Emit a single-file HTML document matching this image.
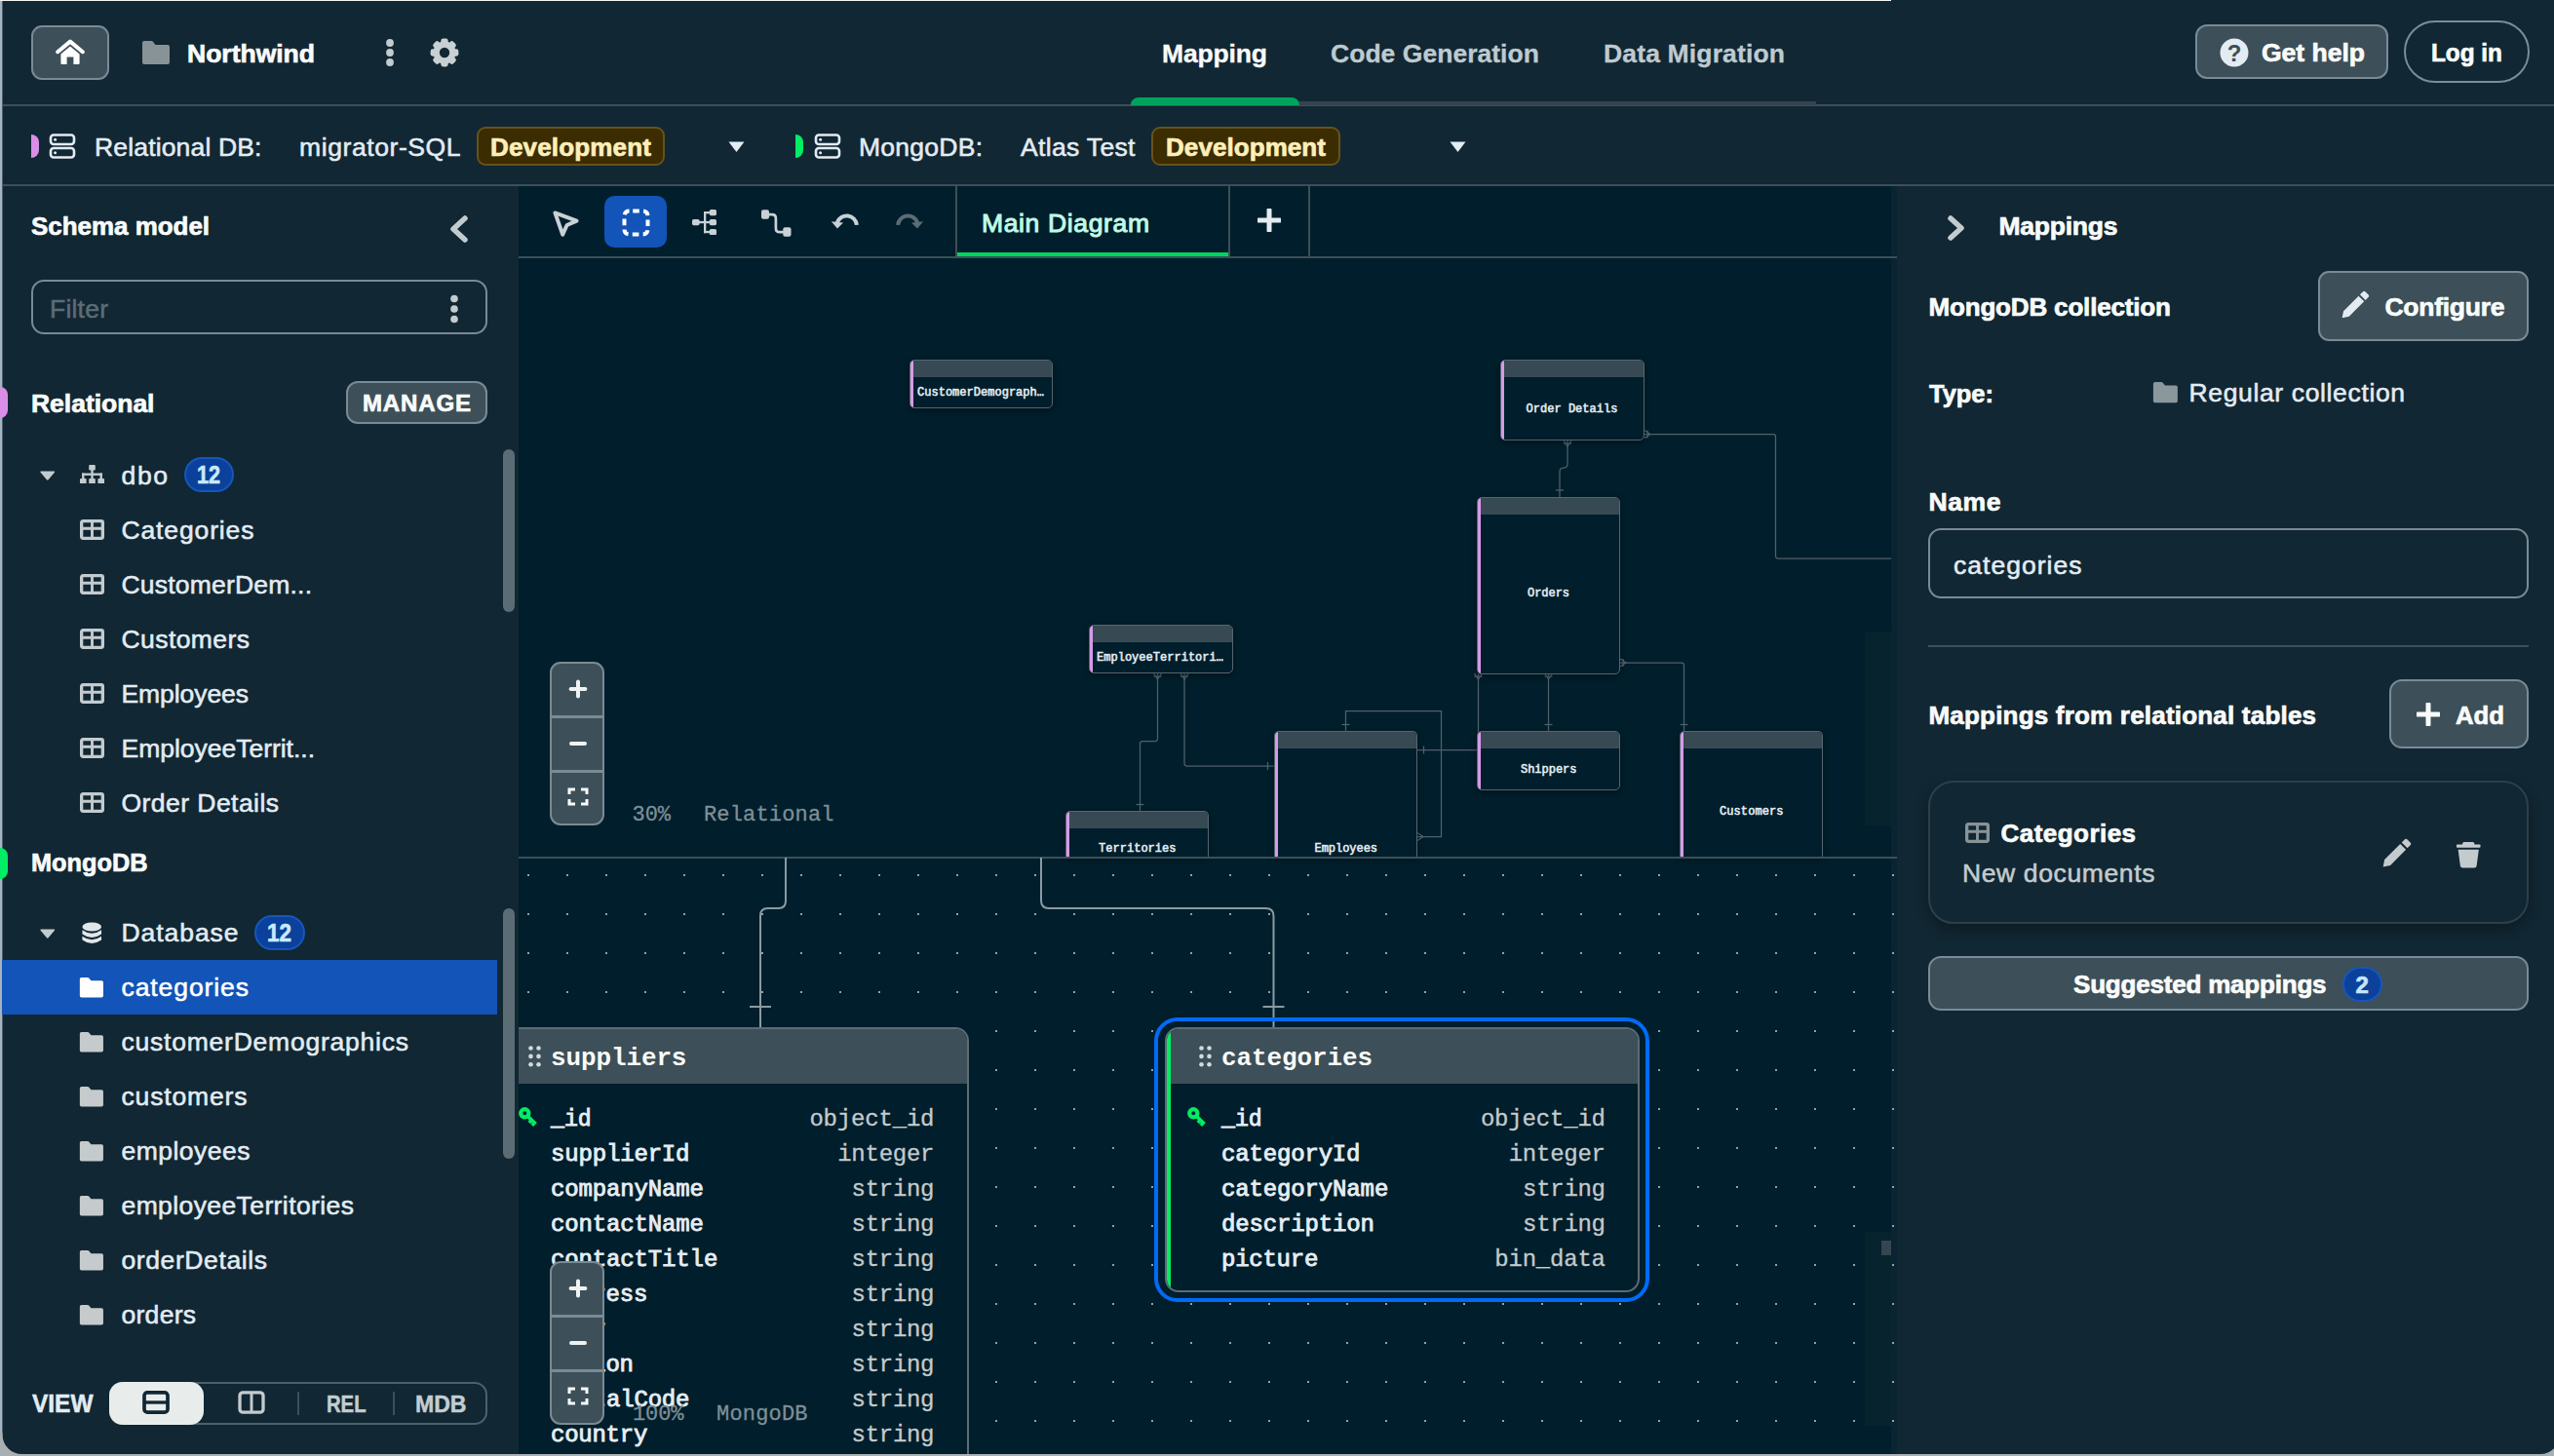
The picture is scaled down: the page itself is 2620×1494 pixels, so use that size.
<!DOCTYPE html>
<html><head><meta charset="utf-8"><title>Relational Migrator</title><style>
html,body{margin:0;padding:0;}
html{width:2620px;height:1494px;overflow:hidden;}
body{width:2620px;height:1494px;overflow:hidden;position:relative;background:#112733;font-family:"Liberation Sans", sans-serif;}
.a{position:absolute;box-sizing:border-box;display:block;}
.t{position:absolute;white-space:pre;line-height:1;}
.s{font-family:"Liberation Sans", sans-serif;}
.m{font-family:"Liberation Mono", monospace;}
</style></head>
<body>
<div class="a" style="left:532px;top:191px;width:1414px;height:1303px;background:#001E2B;"></div>
<div class="a" style="left:1940px;top:191px;width:6px;height:1303px;background:#0A2431;"></div>
<div class="a" style="left:0px;top:107px;width:2620px;height:2px;background:#3D4F58;"></div>
<div class="a" style="left:0px;top:189px;width:2620px;height:2px;background:#3D4F58;"></div>
<div class="a" style="left:32px;top:26px;width:80px;height:56px;background:#3D4F58;border:2px solid #788B97;border-radius:11px;"></div>
<svg class="a" style="left:57px;top:40px;" width="30" height="27" viewBox="0 0 30 27"><path d="M2.2 13.2 L15 2.6 L27.8 13.2" fill="none" stroke="#FFFFFF" stroke-width="4" stroke-linecap="round" stroke-linejoin="round"/><path d="M15 7.4 L24.6 15.4 V25 Q24.6 26 23.6 26 H18.4 V18.6 H11.6 V26 H6.4 Q5.4 26 5.4 25 V15.4 Z" fill="#FFFFFF"/></svg>
<svg class="a" style="left:143px;top:40px;" width="34" height="28" viewBox="0 1 16 14"><path d="M2 2a1 1 0 0 0-1 1v10a1 1 0 0 0 1 1h12a1 1 0 0 0 1-1V5a1 1 0 0 0-1-1H8.2a1 1 0 0 1-.7-.3L6.4 2.3A1 1 0 0 0 5.7 2H2z" fill="#889397"/></svg>
<span class="t s" style="left:192.0px;top:42.1px;font-size:26.5px;color:#F9FBFA;font-weight:700;-webkit-text-stroke:0.7px #F9FBFA;">Northwind</span>
<svg class="a" style="left:393.5px;top:39px;" width="12.0" height="30" viewBox="0 0 12 30"><circle cx="6" cy="5" r="3.9" fill="#C3CBCE"/><circle cx="6" cy="15" r="3.9" fill="#C3CBCE"/><circle cx="6" cy="25" r="3.9" fill="#C3CBCE"/></svg>
<svg class="a" style="left:439.6px;top:38px;" width="32.0" height="32" viewBox="0 0 32.0 32"><g transform="translate(16 16)"><rect x="-3.7" y="-14.4" width="7.4" height="7.2" rx="2.4" transform="rotate(0)" fill="#C8D0D3"/><rect x="-3.7" y="-14.4" width="7.4" height="7.2" rx="2.4" transform="rotate(45)" fill="#C8D0D3"/><rect x="-3.7" y="-14.4" width="7.4" height="7.2" rx="2.4" transform="rotate(90)" fill="#C8D0D3"/><rect x="-3.7" y="-14.4" width="7.4" height="7.2" rx="2.4" transform="rotate(135)" fill="#C8D0D3"/><rect x="-3.7" y="-14.4" width="7.4" height="7.2" rx="2.4" transform="rotate(180)" fill="#C8D0D3"/><rect x="-3.7" y="-14.4" width="7.4" height="7.2" rx="2.4" transform="rotate(225)" fill="#C8D0D3"/><rect x="-3.7" y="-14.4" width="7.4" height="7.2" rx="2.4" transform="rotate(270)" fill="#C8D0D3"/><rect x="-3.7" y="-14.4" width="7.4" height="7.2" rx="2.4" transform="rotate(315)" fill="#C8D0D3"/><circle r="8.352" fill="none" stroke="#C8D0D3" stroke-width="6.336"/></g></svg>
<span class="t s" style="left:1192.0px;top:42.1px;font-size:26.5px;color:#F9FBFA;font-weight:700;letter-spacing:-0.16px;-webkit-text-stroke:0.35px #F9FBFA;">Mapping</span>
<span class="t s" style="left:1365.0px;top:42.1px;font-size:26.5px;color:#BFCAD0;font-weight:700;letter-spacing:0.03px;-webkit-text-stroke:0.3px #BFCAD0;">Code Generation</span>
<span class="t s" style="left:1645.0px;top:42.1px;font-size:26.5px;color:#BFCAD0;font-weight:700;letter-spacing:0.15px;-webkit-text-stroke:0.3px #BFCAD0;">Data Migration</span>
<div class="a" style="left:1160px;top:104px;width:703px;height:4px;background:#33444E;"></div>
<div class="a" style="left:1160px;top:100px;width:173px;height:8px;background:#00A35C;border-radius:8px 8px 0 0;"></div>
<div class="a" style="left:2252px;top:25px;width:198px;height:56px;background:#3D4F58;border:2px solid #788B97;border-radius:12px;"></div>
<svg class="a" style="left:2277px;top:39px;" width="30" height="30" viewBox="0 0 30 30"><circle cx="15" cy="15" r="14.5" fill="#E3ECF3"/><text x="15" y="23.5" text-anchor="middle" font-family="Liberation Sans" font-weight="700" font-size="24" fill="#3D4F58">?</text></svg>
<span class="t s" style="left:2320.0px;top:40.6px;font-size:26.5px;color:#F9FBFA;font-weight:700;-webkit-text-stroke:0.7px #F9FBFA;">Get help</span>
<div class="a" style="left:2466px;top:21px;width:129px;height:64px;border:2px solid #7A8D99;border-radius:32px;"></div>
<span class="t s" style="left:2494.0px;top:40.6px;font-size:26.5px;color:#F9FBFA;font-weight:700;transform:scaleX(0.9184);transform-origin:0 0;-webkit-text-stroke:0.7px #F9FBFA;">Log in</span>
<div class="a" style="left:32px;top:138px;width:8px;height:24px;background:#DA8EE7;border-radius:0 12px 12px 0;"></div>
<svg class="a" style="left:50px;top:137px;" width="28" height="26" viewBox="0 0 28 26"><rect x="2" y="1.5" width="24" height="9.5" rx="3" fill="none" stroke="#E3ECF3" stroke-width="2.6"/><rect x="2" y="15" width="24" height="9.5" rx="3" fill="none" stroke="#E3ECF3" stroke-width="2.6"/><circle cx="6.6" cy="6.2" r="1.5" fill="#E3ECF3"/><circle cx="6.6" cy="19.8" r="1.5" fill="#E3ECF3"/></svg>
<span class="t s" style="left:97.0px;top:137.6px;font-size:26.5px;color:#E3ECF3;letter-spacing:0.16px;-webkit-text-stroke:0.55px #E3ECF3;">Relational DB:</span>
<span class="t s" style="left:307.0px;top:137.6px;font-size:26.5px;color:#E3ECF3;letter-spacing:0.59px;-webkit-text-stroke:0.55px #E3ECF3;">migrator-SQL</span>
<div class="a" style="left:489px;top:130px;width:193px;height:40px;background:#3B2C02;border:2px solid #66531A;border-radius:9px;"></div>
<span class="t s" style="left:503.0px;top:138.0px;font-size:26px;color:#FDEFB9;font-weight:700;letter-spacing:0.17px;-webkit-text-stroke:0.7px #FDEFB9;">Development</span>
<svg class="a" style="left:747px;top:145px;" width="17" height="12" viewBox="0 0 17 12"><path d="M0.5 0.5 H16.5 L8.5 11 Z" fill="#E3ECF3"/></svg>
<div class="a" style="left:816px;top:138px;width:8px;height:24px;background:#00ED64;border-radius:0 12px 12px 0;"></div>
<svg class="a" style="left:835px;top:137px;" width="28" height="26" viewBox="0 0 28 26"><rect x="2" y="1.5" width="24" height="9.5" rx="3" fill="none" stroke="#E3ECF3" stroke-width="2.6"/><rect x="2" y="15" width="24" height="9.5" rx="3" fill="none" stroke="#E3ECF3" stroke-width="2.6"/><circle cx="6.6" cy="6.2" r="1.5" fill="#E3ECF3"/><circle cx="6.6" cy="19.8" r="1.5" fill="#E3ECF3"/></svg>
<span class="t s" style="left:881.0px;top:137.6px;font-size:26.5px;color:#E3ECF3;letter-spacing:0.26px;-webkit-text-stroke:0.55px #E3ECF3;">MongoDB:</span>
<span class="t s" style="left:1047.0px;top:137.6px;font-size:26.5px;color:#E3ECF3;letter-spacing:0.34px;-webkit-text-stroke:0.55px #E3ECF3;">Atlas Test</span>
<div class="a" style="left:1181px;top:130px;width:194px;height:40px;background:#3B2C02;border:2px solid #66531A;border-radius:9px;"></div>
<span class="t s" style="left:1196.0px;top:138.0px;font-size:26px;color:#FDEFB9;font-weight:700;letter-spacing:0.07px;-webkit-text-stroke:0.7px #FDEFB9;">Development</span>
<svg class="a" style="left:1487px;top:145px;" width="17" height="12" viewBox="0 0 17 12"><path d="M0.5 0.5 H16.5 L8.5 11 Z" fill="#E3ECF3"/></svg>
<div class="a" style="left:0px;top:0px;width:1940px;height:1px;background:#F4F4F4;"></div>
<div class="a" style="left:0px;top:1px;width:2px;height:1493px;background:#A6B3C0;"></div>
<div class="a" style="left:2px;top:1px;width:1px;height:1493px;background:#4B5F6E;"></div>
<span class="t s" style="left:32.0px;top:219.1px;font-size:26.5px;color:#F9FBFA;font-weight:700;transform:scaleX(0.9784);transform-origin:0 0;-webkit-text-stroke:0.7px #F9FBFA;">Schema model</span>
<svg class="a" style="left:460px;top:220px;" width="22" height="30" viewBox="0 0 22 30"><path d="M17 4 L5 15 L17 26" fill="none" stroke="#C3CBCE" stroke-width="5.5" stroke-linecap="round" stroke-linejoin="round"/></svg>
<div class="a" style="left:32px;top:287px;width:468px;height:56px;border:2px solid #788B97;border-radius:13px;"></div>
<span class="t s" style="left:51.0px;top:303.6px;font-size:26.5px;color:#5C6C75;letter-spacing:0.22px;-webkit-text-stroke:0.55px #5C6C75;">Filter</span>
<svg class="a" style="left:460px;top:302px;" width="12" height="30" viewBox="0 0 12 30"><circle cx="6" cy="4.5" r="3.8" fill="#C3CBCE"/><circle cx="6" cy="15" r="3.8" fill="#C3CBCE"/><circle cx="6" cy="25.5" r="3.8" fill="#C3CBCE"/></svg>
<div class="a" style="left:0px;top:397px;width:8px;height:32px;background:#DA8EE7;border-radius:0 8px 8px 0;"></div>
<span class="t s" style="left:32.0px;top:401.1px;font-size:26.5px;color:#F9FBFA;font-weight:700;letter-spacing:-0.02px;-webkit-text-stroke:0.7px #F9FBFA;">Relational</span>
<div class="a" style="left:355px;top:391px;width:145px;height:44px;background:#3D4F58;border:2px solid #788B97;border-radius:12px;"></div>
<span class="t s" style="left:372.0px;top:401.7px;font-size:24px;color:#F9FBFA;font-weight:700;letter-spacing:0.87px;-webkit-text-stroke:0.7px #F9FBFA;">MANAGE</span>
<div class="a" style="left:516px;top:461px;width:12px;height:167px;background:#5C6C75;border-radius:6px;"></div>
<div class="a" style="left:516px;top:932px;width:12px;height:257px;background:#5C6C75;border-radius:6px;"></div>
<svg class="a" style="left:41px;top:483px;" width="15.5" height="10" viewBox="0 0 15.5 10"><path d="M1 0.6 H14.5 Q15.6 0.8 14.9 1.8 L8.6 9.3 Q7.75 10.1 6.9 9.3 L0.6 1.8 Q-0.1 0.8 1 0.6 Z" fill="#C3CBCE"/></svg>
<svg class="a" style="left:81.5px;top:476.5px;" width="25.0" height="19.5" viewBox="0 0 25 19.5"><g fill="#C3CBCE"><rect x="9.2" y="0" width="6.6" height="5.6" rx="1"/><rect x="0" y="14.1" width="6.6" height="5.4" rx="1"/><rect x="9.2" y="14.1" width="6.6" height="5.4" rx="1"/><rect x="18.4" y="14.1" width="6.6" height="5.4" rx="1"/><rect x="11.3" y="5" width="2.4" height="9.6"/><rect x="2.1" y="8.5" width="20.8" height="2.4"/><rect x="2.1" y="8.5" width="2.4" height="6"/><rect x="20.5" y="8.5" width="2.4" height="6"/></g></svg>
<span class="t s" style="left:124.5px;top:474.6px;font-size:26.5px;color:#E3ECF3;letter-spacing:1.64px;-webkit-text-stroke:0.55px #E3ECF3;">dbo</span>
<div class="a" style="left:189px;top:469px;width:51px;height:36px;background:#0B419A;border:2px solid #1656BE;border-radius:18px;"></div>
<span class="t s" style="left:202.0px;top:474.8px;font-size:25px;color:#C8EAFF;font-weight:700;transform:scaleX(0.8629);transform-origin:0 0;-webkit-text-stroke:0.6px #C8EAFF;">12</span>
<svg class="a" style="left:81.5px;top:532.5px;" width="25.0" height="21.0" viewBox="0 0 25.0 21.0"><rect x="1.65" y="1.65" width="21.7" height="17.7" rx="1.5" fill="none" stroke="#C3CBCE" stroke-width="3.3"/><path d="M1 9.2 H24 M12.5 1 V20" stroke="#C3CBCE" stroke-width="2.9" fill="none"/></svg>
<span class="t s" style="left:124.5px;top:530.6px;font-size:26.5px;color:#E3ECF3;letter-spacing:0.87px;-webkit-text-stroke:0.55px #E3ECF3;">Categories</span>
<svg class="a" style="left:81.5px;top:588.5px;" width="25.0" height="21.0" viewBox="0 0 25.0 21.0"><rect x="1.65" y="1.65" width="21.7" height="17.7" rx="1.5" fill="none" stroke="#C3CBCE" stroke-width="3.3"/><path d="M1 9.2 H24 M12.5 1 V20" stroke="#C3CBCE" stroke-width="2.9" fill="none"/></svg>
<span class="t s" style="left:124.5px;top:586.6px;font-size:26.5px;color:#E3ECF3;letter-spacing:0.20px;-webkit-text-stroke:0.55px #E3ECF3;">CustomerDem...</span>
<svg class="a" style="left:81.5px;top:644.5px;" width="25.0" height="21.0" viewBox="0 0 25.0 21.0"><rect x="1.65" y="1.65" width="21.7" height="17.7" rx="1.5" fill="none" stroke="#C3CBCE" stroke-width="3.3"/><path d="M1 9.2 H24 M12.5 1 V20" stroke="#C3CBCE" stroke-width="2.9" fill="none"/></svg>
<span class="t s" style="left:124.5px;top:642.6px;font-size:26.5px;color:#E3ECF3;letter-spacing:0.42px;-webkit-text-stroke:0.55px #E3ECF3;">Customers</span>
<svg class="a" style="left:81.5px;top:700.5px;" width="25.0" height="21.0" viewBox="0 0 25.0 21.0"><rect x="1.65" y="1.65" width="21.7" height="17.7" rx="1.5" fill="none" stroke="#C3CBCE" stroke-width="3.3"/><path d="M1 9.2 H24 M12.5 1 V20" stroke="#C3CBCE" stroke-width="2.9" fill="none"/></svg>
<span class="t s" style="left:124.5px;top:698.6px;font-size:26.5px;color:#E3ECF3;letter-spacing:-0.07px;-webkit-text-stroke:0.55px #E3ECF3;">Employees</span>
<svg class="a" style="left:81.5px;top:756.5px;" width="25.0" height="21.0" viewBox="0 0 25.0 21.0"><rect x="1.65" y="1.65" width="21.7" height="17.7" rx="1.5" fill="none" stroke="#C3CBCE" stroke-width="3.3"/><path d="M1 9.2 H24 M12.5 1 V20" stroke="#C3CBCE" stroke-width="2.9" fill="none"/></svg>
<span class="t s" style="left:124.5px;top:754.6px;font-size:26.5px;color:#E3ECF3;letter-spacing:-0.02px;-webkit-text-stroke:0.55px #E3ECF3;">EmployeeTerrit...</span>
<svg class="a" style="left:81.5px;top:812.5px;" width="25.0" height="21.0" viewBox="0 0 25.0 21.0"><rect x="1.65" y="1.65" width="21.7" height="17.7" rx="1.5" fill="none" stroke="#C3CBCE" stroke-width="3.3"/><path d="M1 9.2 H24 M12.5 1 V20" stroke="#C3CBCE" stroke-width="2.9" fill="none"/></svg>
<span class="t s" style="left:124.5px;top:810.6px;font-size:26.5px;color:#E3ECF3;letter-spacing:0.45px;-webkit-text-stroke:0.55px #E3ECF3;">Order Details</span>
<div class="a" style="left:0px;top:870px;width:8px;height:32px;background:#00ED64;border-radius:0 8px 8px 0;"></div>
<span class="t s" style="left:32.0px;top:871.6px;font-size:26.5px;color:#F9FBFA;font-weight:700;transform:scaleX(0.9552);transform-origin:0 0;-webkit-text-stroke:0.7px #F9FBFA;">MongoDB</span>
<svg class="a" style="left:41px;top:953px;" width="15.5" height="10" viewBox="0 0 15.5 10"><path d="M1 0.6 H14.5 Q15.6 0.8 14.9 1.8 L8.6 9.3 Q7.75 10.1 6.9 9.3 L0.6 1.8 Q-0.1 0.8 1 0.6 Z" fill="#C3CBCE"/></svg>
<svg class="a" style="left:84px;top:945.5px;" width="20.5" height="23.0" viewBox="0 0 22 24"><g fill="#E1E7EB"><ellipse cx="11" cy="5" rx="10.5" ry="4.8"/><path d="M0.5 8.5 Q11 16 21.5 8.5 V13 Q11 20.5 0.5 13 Z"/><path d="M0.5 15.5 Q11 23 21.5 15.5 V19.5 Q11 27 0.5 19.5 Z"/></g></svg>
<span class="t s" style="left:124.5px;top:943.6px;font-size:26.5px;color:#E3ECF3;letter-spacing:0.94px;-webkit-text-stroke:0.55px #E3ECF3;">Database</span>
<div class="a" style="left:261px;top:939px;width:52px;height:36px;background:#0B419A;border:2px solid #1656BE;border-radius:18px;"></div>
<span class="t s" style="left:274.0px;top:944.8px;font-size:25px;color:#C8EAFF;font-weight:700;transform:scaleX(0.8989);transform-origin:0 0;-webkit-text-stroke:0.6px #C8EAFF;">12</span>
<div class="a" style="left:2px;top:985px;width:508px;height:56px;background:#1254B7;"></div>
<svg class="a" style="left:81.1px;top:1001.6px;" width="25.80000000000001" height="22.399999999999977" viewBox="0.5 1.5 15 13"><path d="M2 2a1 1 0 0 0-1 1v10a1 1 0 0 0 1 1h12a1 1 0 0 0 1-1V5a1 1 0 0 0-1-1H8.2a1 1 0 0 1-.7-.3L6.4 2.3A1 1 0 0 0 5.7 2H2z" fill="#FFFFFF"/></svg>
<span class="t s" style="left:124.5px;top:999.6px;font-size:26.5px;color:#FFFFFF;letter-spacing:0.91px;-webkit-text-stroke:0.55px #FFFFFF;">categories</span>
<svg class="a" style="left:81.1px;top:1057.6px;" width="25.80000000000001" height="22.40000000000009" viewBox="0.5 1.5 15 13"><path d="M2 2a1 1 0 0 0-1 1v10a1 1 0 0 0 1 1h12a1 1 0 0 0 1-1V5a1 1 0 0 0-1-1H8.2a1 1 0 0 1-.7-.3L6.4 2.3A1 1 0 0 0 5.7 2H2z" fill="#C5CBCC"/></svg>
<span class="t s" style="left:124.5px;top:1055.6px;font-size:26.5px;color:#E3ECF3;letter-spacing:0.77px;-webkit-text-stroke:0.55px #E3ECF3;">customerDemographics</span>
<svg class="a" style="left:81.1px;top:1113.6px;" width="25.80000000000001" height="22.40000000000009" viewBox="0.5 1.5 15 13"><path d="M2 2a1 1 0 0 0-1 1v10a1 1 0 0 0 1 1h12a1 1 0 0 0 1-1V5a1 1 0 0 0-1-1H8.2a1 1 0 0 1-.7-.3L6.4 2.3A1 1 0 0 0 5.7 2H2z" fill="#C5CBCC"/></svg>
<span class="t s" style="left:124.5px;top:1111.6px;font-size:26.5px;color:#E3ECF3;letter-spacing:0.85px;-webkit-text-stroke:0.55px #E3ECF3;">customers</span>
<svg class="a" style="left:81.1px;top:1169.6px;" width="25.80000000000001" height="22.40000000000009" viewBox="0.5 1.5 15 13"><path d="M2 2a1 1 0 0 0-1 1v10a1 1 0 0 0 1 1h12a1 1 0 0 0 1-1V5a1 1 0 0 0-1-1H8.2a1 1 0 0 1-.7-.3L6.4 2.3A1 1 0 0 0 5.7 2H2z" fill="#C5CBCC"/></svg>
<span class="t s" style="left:124.5px;top:1167.6px;font-size:26.5px;color:#E3ECF3;letter-spacing:0.48px;-webkit-text-stroke:0.55px #E3ECF3;">employees</span>
<svg class="a" style="left:81.1px;top:1225.6px;" width="25.80000000000001" height="22.40000000000009" viewBox="0.5 1.5 15 13"><path d="M2 2a1 1 0 0 0-1 1v10a1 1 0 0 0 1 1h12a1 1 0 0 0 1-1V5a1 1 0 0 0-1-1H8.2a1 1 0 0 1-.7-.3L6.4 2.3A1 1 0 0 0 5.7 2H2z" fill="#C5CBCC"/></svg>
<span class="t s" style="left:124.5px;top:1223.6px;font-size:26.5px;color:#E3ECF3;letter-spacing:0.40px;-webkit-text-stroke:0.55px #E3ECF3;">employeeTerritories</span>
<svg class="a" style="left:81.1px;top:1281.6px;" width="25.80000000000001" height="22.40000000000009" viewBox="0.5 1.5 15 13"><path d="M2 2a1 1 0 0 0-1 1v10a1 1 0 0 0 1 1h12a1 1 0 0 0 1-1V5a1 1 0 0 0-1-1H8.2a1 1 0 0 1-.7-.3L6.4 2.3A1 1 0 0 0 5.7 2H2z" fill="#C5CBCC"/></svg>
<span class="t s" style="left:124.5px;top:1279.6px;font-size:26.5px;color:#E3ECF3;letter-spacing:0.60px;-webkit-text-stroke:0.55px #E3ECF3;">orderDetails</span>
<svg class="a" style="left:81.1px;top:1337.6px;" width="25.80000000000001" height="22.40000000000009" viewBox="0.5 1.5 15 13"><path d="M2 2a1 1 0 0 0-1 1v10a1 1 0 0 0 1 1h12a1 1 0 0 0 1-1V5a1 1 0 0 0-1-1H8.2a1 1 0 0 1-.7-.3L6.4 2.3A1 1 0 0 0 5.7 2H2z" fill="#C5CBCC"/></svg>
<span class="t s" style="left:124.5px;top:1335.6px;font-size:26.5px;color:#E3ECF3;letter-spacing:0.28px;-webkit-text-stroke:0.55px #E3ECF3;">orders</span>
<span class="t s" style="left:32.5px;top:1427.8px;font-size:25px;color:#E3ECF3;font-weight:700;transform:scaleX(0.9780);transform-origin:0 0;-webkit-text-stroke:0.5px #E3ECF3;">VIEW</span>
<div class="a" style="left:112px;top:1418px;width:388px;height:44px;border:2px solid #4E616B;border-radius:13px;"></div>
<div class="a" style="left:112px;top:1418px;width:97px;height:44px;background:#E8EDEB;border-radius:14px;"></div>
<svg class="a" style="left:146px;top:1427px;" width="28" height="24" viewBox="0 0 30 26"><rect x="2" y="2" width="26" height="22" rx="3.5" fill="none" stroke="#112733" stroke-width="4"/><rect x="2" y="11.2" width="26" height="3.6" fill="#112733"/></svg>
<svg class="a" style="left:243.5px;top:1427px;" width="28.0" height="24" viewBox="0 0 30 26"><rect x="2" y="2" width="26" height="22" rx="3.5" fill="none" stroke="#C3CBCE" stroke-width="3.6"/><rect x="13.4" y="2" width="3.2" height="22" fill="#C3CBCE"/></svg>
<div class="a" style="left:305px;top:1428px;width:2px;height:24px;background:#3D4F58;"></div>
<span class="t s" style="left:334.5px;top:1428.7px;font-size:24px;color:#C3CDD1;font-weight:700;transform:scaleX(0.8438);transform-origin:0 0;-webkit-text-stroke:0.5px #C3CDD1;">REL</span>
<div class="a" style="left:403px;top:1428px;width:2px;height:24px;background:#3D4F58;"></div>
<span class="t s" style="left:426.0px;top:1428.7px;font-size:24px;color:#C3CDD1;font-weight:700;transform:scaleX(0.9605);transform-origin:0 0;-webkit-text-stroke:0.5px #C3CDD1;">MDB</span>
<svg class="a" style="left:532px;top:881px" width="1414" height="611" viewBox="0 0 1414 611"><defs><pattern id="dots" x="9" y="16" width="40" height="40" patternUnits="userSpaceOnUse"><rect x="0" y="0" width="2" height="2" fill="#8FA1A9"/></pattern></defs><rect x="0" y="0" width="1414" height="611" fill="url(#dots)"/></svg>
<div class="a" style="left:1913px;top:648px;width:27px;height:199px;background:#06232E;"></div>
<div class="a" style="left:1913px;top:1264px;width:27px;height:199px;background:#06232E;"></div>
<div class="a" style="left:532px;top:263px;width:1414px;height:2px;background:#3D4F58;"></div>
<svg class="a" style="left:566px;top:214px;" width="30" height="30" viewBox="0 0 30 30"><path d="M3.4 4.4 L25.6 12.6 L15.6 17 L11.2 26.6 Z" fill="none" stroke="#C7D1D6" stroke-width="4" stroke-linejoin="round"/></svg>
<div class="a" style="left:620px;top:201px;width:64px;height:53px;background:#1254B7;border-radius:10px;"></div>
<svg class="a" style="left:637px;top:213px;" width="31" height="31" viewBox="0 0 31 31"><rect x="3.5" y="3.5" width="24" height="24" rx="5" fill="none" stroke="#FFFFFF" stroke-width="4" stroke-dasharray="6.6 4.33" stroke-dashoffset="-3.7"/></svg>
<svg class="a" style="left:710px;top:215px;" width="25" height="26.19999999999999" viewBox="0 0 25 26.2"><g fill="#C7D1D6"><rect x="0" y="9.9" width="7.6" height="6.3" rx="1.6"/><rect x="17.8" y="0" width="7.2" height="6.2" rx="1.6"/><rect x="17.8" y="9.9" width="7.2" height="6.3" rx="1.6"/><rect x="17.8" y="20" width="7.2" height="6.2" rx="1.6"/><rect x="7" y="11.9" width="11.4" height="2.3"/><rect x="12" y="2" width="2.3" height="22.2"/><rect x="12" y="2" width="6.4" height="2.3"/><rect x="12" y="21.9" width="6.4" height="2.3"/></g></svg>
<svg class="a" style="left:781px;top:215px;" width="30.5" height="28" viewBox="0 0 30.5 28"><g fill="#C7D1D6"><rect x="0" y="0.3" width="8" height="9.4" rx="2"/><rect x="22.3" y="18.3" width="8.2" height="9.5" rx="2"/></g><path d="M7.5 5.2 H11 Q14.9 5.2 14.9 9.2 V19.2 Q14.9 23.2 18.9 23.2 H23" fill="none" stroke="#C7D1D6" stroke-width="2.7"/></svg>
<svg class="a" style="left:852px;top:217px;" width="29" height="21" viewBox="0 0 29 21"><path d="M6.8 11.4 A10.35 10.35 0 0 1 26.9 13.9" fill="none" stroke="#C7D1D6" stroke-width="4" stroke-linecap="butt"/><path d="M0.8 10.2 L13 11.4 L7 17.4 Z" fill="#C7D1D6"/></svg>
<svg class="a" style="left:919px;top:217px;" width="29" height="21" viewBox="0 0 29 21"><g transform="translate(29 0) scale(-1 1)"><path d="M6.8 11.4 A10.35 10.35 0 0 1 26.9 13.9" fill="none" stroke="#5C6C75" stroke-width="4" stroke-linecap="butt"/><path d="M0.8 10.2 L13 11.4 L7 17.4 Z" fill="#5C6C75"/></g></svg>
<div class="a" style="left:980px;top:191px;width:2px;height:72px;background:#3D4F58;"></div>
<span class="t s" style="left:1007.0px;top:215.6px;font-size:26.5px;color:#C0FAE6;letter-spacing:0.64px;-webkit-text-stroke:1.0px #C0FAE6;">Main Diagram</span>
<div class="a" style="left:982px;top:259px;width:278px;height:4px;background:#00D65C;"></div>
<div class="a" style="left:1260px;top:191px;width:2px;height:72px;background:#3D4F58;"></div>
<svg class="a" style="left:1290px;top:214px;" width="24" height="24" viewBox="0 0 24 24"><path d="M12 1.5 V22.5 M1.5 12 H22.5" stroke="#E3ECF3" stroke-width="5" stroke-linecap="round"/></svg>
<div class="a" style="left:1342px;top:191px;width:2px;height:72px;background:#3D4F58;"></div>
<svg class="a" style="left:532px;top:265px;" width="1414" height="614" viewBox="532 265 1414 614"><path d="M1608 452 V476 Q1608 480 1604 480 Q1600 480 1600 484 V510" fill="none" stroke="#4F616B" stroke-width="1.25"/><path d="M1604 452 L1608 458 L1612 452 M1604 455 H1612" fill="none" stroke="#4F616B" stroke-width="1.25"/><path d="M1596 503 H1604" fill="none" stroke="#4F616B" stroke-width="1.25"/><path d="M1687 445.5 H1819 Q1821.5 445.5 1821.5 448 V570.5 Q1821.5 573 1824 573 H1940" fill="none" stroke="#4F616B" stroke-width="1.25"/><path d="M1687 441.5 L1693 445.5 L1687 449.5 M1690 441.5 V449.5" fill="none" stroke="#4F616B" stroke-width="1.25"/><path d="M1662 680 H1725 Q1727.5 680 1727.5 682.5 V750" fill="none" stroke="#4F616B" stroke-width="1.25"/><path d="M1662 676 L1668 680 L1662 684 M1665 676 V684" fill="none" stroke="#4F616B" stroke-width="1.25"/><path d="M1723.5 743.5 H1731.5" fill="none" stroke="#4F616B" stroke-width="1.25"/><path d="M1588.5 691 V750" fill="none" stroke="#4F616B" stroke-width="1.25"/><path d="M1584.5 691 L1588.5 697 L1592.5 691 M1584.5 694 H1592.5" fill="none" stroke="#4F616B" stroke-width="1.25"/><path d="M1584.5 743.5 H1592.5" fill="none" stroke="#4F616B" stroke-width="1.25"/><path d="M1516.5 691 V769.5 H1454" fill="none" stroke="#4F616B" stroke-width="1.25"/><path d="M1512.5 691 L1516.5 697 L1520.5 691 M1512.5 694 H1520.5" fill="none" stroke="#4F616B" stroke-width="1.25"/><path d="M1460.5 765.5 V773.5" fill="none" stroke="#4F616B" stroke-width="1.25"/><path d="M1187.5 691 V758 Q1187.5 760.5 1185 760.5 H1172 Q1169.5 760.5 1169.5 763 V832" fill="none" stroke="#4F616B" stroke-width="1.25"/><path d="M1183.5 691 L1187.5 697 L1191.5 691 M1183.5 694 H1191.5" fill="none" stroke="#4F616B" stroke-width="1.25"/><path d="M1165.5 825.5 H1173.5" fill="none" stroke="#4F616B" stroke-width="1.25"/><path d="M1215 691 V783.5 Q1215 786 1217.5 786 H1307" fill="none" stroke="#4F616B" stroke-width="1.25"/><path d="M1211 691 L1215 697 L1219 691 M1211 694 H1219" fill="none" stroke="#4F616B" stroke-width="1.25"/><path d="M1300.5 782 V790" fill="none" stroke="#4F616B" stroke-width="1.25"/><path d="M1380.5 750 V729.5 H1478.5 V858.5 H1454" fill="none" stroke="#4F616B" stroke-width="1.25"/><path d="M1376.5 743.5 H1384.5" fill="none" stroke="#4F616B" stroke-width="1.25"/><path d="M1454 854.5 L1460 858.5 L1454 862.5" fill="none" stroke="#4F616B" stroke-width="1.25"/></svg>
<div class="a" style="left:933px;top:369px;width:147px;height:50px;background:#001E2B;border:1.5px solid #54666F;border-radius:5px;overflow:hidden;box-shadow:0 2px 6px rgba(0,0,0,0.35);"><div style="position:absolute;left:0;top:0;right:0;height:17px;background:#374A54;"></div><div style="position:absolute;left:0;top:0;bottom:0;width:2.5px;background:#D69AE8;"></div></div>
<span class="t m" style="left:941.0px;top:396.8px;font-size:12px;color:#E6EEF4;letter-spacing:0.02px;-webkit-text-stroke:0.55px #E6EEF4;">CustomerDemograph…</span>
<div class="a" style="left:1539px;top:369px;width:148px;height:83px;background:#001E2B;border:1.5px solid #54666F;border-radius:5px;overflow:hidden;box-shadow:0 2px 6px rgba(0,0,0,0.35);"><div style="position:absolute;left:0;top:0;right:0;height:17px;background:#374A54;"></div><div style="position:absolute;left:0;top:0;bottom:0;width:2.5px;background:#D69AE8;"></div></div>
<span class="t m" style="left:1565.5px;top:413.8px;font-size:12px;color:#E6EEF4;letter-spacing:0.03px;-webkit-text-stroke:0.55px #E6EEF4;">Order Details</span>
<div class="a" style="left:1515px;top:510px;width:147px;height:182px;background:#001E2B;border:1.5px solid #54666F;border-radius:5px;overflow:hidden;box-shadow:0 2px 6px rgba(0,0,0,0.35);"><div style="position:absolute;left:0;top:0;right:0;height:17px;background:#374A54;"></div><div style="position:absolute;left:0;top:0;bottom:0;width:2.5px;background:#D69AE8;"></div></div>
<span class="t m" style="left:1567.0px;top:603.3px;font-size:12px;color:#E6EEF4;letter-spacing:-0.04px;-webkit-text-stroke:0.55px #E6EEF4;">Orders</span>
<div class="a" style="left:1117px;top:641px;width:148px;height:50px;background:#001E2B;border:1.5px solid #54666F;border-radius:5px;overflow:hidden;box-shadow:0 2px 6px rgba(0,0,0,0.35);"><div style="position:absolute;left:0;top:0;right:0;height:17px;background:#374A54;"></div><div style="position:absolute;left:0;top:0;bottom:0;width:2.5px;background:#D69AE8;"></div></div>
<span class="t m" style="left:1125.0px;top:668.8px;font-size:12px;color:#E6EEF4;letter-spacing:0.02px;-webkit-text-stroke:0.55px #E6EEF4;">EmployeeTerritori…</span>
<div class="a" style="left:1093px;top:831.5px;width:147px;height:48.5px;background:#001E2B;border:1.5px solid #54666F;border-radius:5px 5px 0 0;border-bottom:none;overflow:hidden;box-shadow:0 2px 6px rgba(0,0,0,0.35);"><div style="position:absolute;left:0;top:0;right:0;height:17px;background:#374A54;"></div><div style="position:absolute;left:0;top:0;bottom:0;width:2.5px;background:#D69AE8;"></div></div>
<span class="t m" style="left:1127.0px;top:865.3px;font-size:12px;color:#E6EEF4;letter-spacing:0.03px;-webkit-text-stroke:0.55px #E6EEF4;">Territories</span>
<div class="a" style="left:1307px;top:750px;width:147px;height:130px;background:#001E2B;border:1.5px solid #54666F;border-radius:5px 5px 0 0;border-bottom:none;overflow:hidden;box-shadow:0 2px 6px rgba(0,0,0,0.35);"><div style="position:absolute;left:0;top:0;right:0;height:17px;background:#374A54;"></div><div style="position:absolute;left:0;top:0;bottom:0;width:2.5px;background:#D69AE8;"></div></div>
<span class="t m" style="left:1348.5px;top:865.3px;font-size:12px;color:#E6EEF4;letter-spacing:-0.04px;-webkit-text-stroke:0.55px #E6EEF4;">Employees</span>
<div class="a" style="left:1515px;top:750px;width:147px;height:60.5px;background:#001E2B;border:1.5px solid #54666F;border-radius:5px;overflow:hidden;box-shadow:0 2px 6px rgba(0,0,0,0.35);"><div style="position:absolute;left:0;top:0;right:0;height:17px;background:#374A54;"></div><div style="position:absolute;left:0;top:0;bottom:0;width:2.5px;background:#D69AE8;"></div></div>
<span class="t m" style="left:1560.0px;top:784.3px;font-size:12px;color:#E6EEF4;letter-spacing:-0.02px;-webkit-text-stroke:0.55px #E6EEF4;">Shippers</span>
<div class="a" style="left:1723px;top:750px;width:147px;height:130px;background:#001E2B;border:1.5px solid #54666F;border-radius:5px 5px 0 0;border-bottom:none;overflow:hidden;box-shadow:0 2px 6px rgba(0,0,0,0.35);"><div style="position:absolute;left:0;top:0;right:0;height:17px;background:#374A54;"></div><div style="position:absolute;left:0;top:0;bottom:0;width:2.5px;background:#D69AE8;"></div></div>
<span class="t m" style="left:1764.0px;top:826.8px;font-size:12px;color:#E6EEF4;letter-spacing:0.09px;-webkit-text-stroke:0.55px #E6EEF4;">Customers</span>
<div class="a" style="left:532px;top:879px;width:1414px;height:2px;background:#3D4F58;"></div>
<div class="a" style="left:564px;top:679px;width:56px;height:168px;background:#3D4F58;border:2px solid #7B8B93;border-radius:11px;"></div>
<div class="a" style="left:566px;top:734px;width:53px;height:3px;background:#7B8B93;"></div>
<div class="a" style="left:566px;top:790px;width:53px;height:3px;background:#7B8B93;"></div>
<svg class="a" style="left:582.5px;top:697px;" width="20.0" height="20" viewBox="0 0 20.0 20"><path d="M10 2.6 V17.4 M2.6 10 H17.4" stroke="#EEF2F2" stroke-width="4" stroke-linecap="round"/></svg>
<svg class="a" style="left:582.5px;top:753px;" width="20.0" height="20" viewBox="0 0 20.0 20"><path d="M3 10 H17" stroke="#EEF2F2" stroke-width="4" stroke-linecap="round"/></svg>
<svg class="a" style="left:581.5px;top:808.3px;" width="22.0" height="19.0" viewBox="0 0 22 19"><path d="M2 7 V2 H8 M14 2 H20 V7 M20 12 V17 H14 M8 17 H2 V12" fill="none" stroke="#F9FBFA" stroke-width="3"/></svg>
<span class="t m" style="left:648.5px;top:825.6px;font-size:22px;color:#7E8F98;letter-spacing:-0.05px;-webkit-text-stroke:0.3px #7E8F98;">30%</span>
<span class="t m" style="left:722.0px;top:825.6px;font-size:22px;color:#7E8F98;letter-spacing:0.16px;-webkit-text-stroke:0.3px #7E8F98;">Relational</span>
<svg class="a" style="left:532px;top:880px;" width="1414" height="614" viewBox="532 880 1414 614"><g fill="none" stroke="#8A9BA3" stroke-width="2"><path d="M806 880 V924.5 Q806 932 798.5 932 H787.5 Q780 932 780 939.5 V1054"/><path d="M769 1033 H791"/><path d="M1068 880 V924 Q1068 932 1076 932 H1298.5 Q1306.5 932 1306.5 940 V1054"/><path d="M1295.5 1033 H1317.5"/></g></svg>
<div class="a" style="left:520px;top:1054px;width:474px;height:440px;background:#001E2B;border:2px solid #5C6C75;border-bottom:none;border-radius:14px 14px 0 0;overflow:hidden;clip-path:inset(0 0 0 12px);"><div style="position:absolute;left:0;top:0;right:0;height:56px;background:#3D4F58;"></div></div>
<svg class="a" style="left:541.5px;top:1073.2px;" width="13.0" height="21.799999999999955" viewBox="0 0 13 21.8"><circle cx="2.5" cy="2.5" r="2.3" fill="#D3DADE"/><circle cx="2.5" cy="10.9" r="2.3" fill="#D3DADE"/><circle cx="2.5" cy="19.2" r="2.3" fill="#D3DADE"/><circle cx="10.5" cy="2.5" r="2.3" fill="#D3DADE"/><circle cx="10.5" cy="10.9" r="2.3" fill="#D3DADE"/><circle cx="10.5" cy="19.2" r="2.3" fill="#D3DADE"/></svg>
<span class="t m" style="left:565.0px;top:1073.1px;font-size:26px;color:#F9FBFA;font-weight:700;letter-spacing:-0.12px;">suppliers</span>
<svg class="a" style="left:532px;top:1136px;" width="20" height="20" viewBox="0 0 20 20"><g fill="none" stroke="#00ED64" stroke-width="4.2"><circle cx="6.3" cy="6.3" r="4.1"/></g><path d="M8.6 8.6 L17.6 17.2 M13.2 13.4 L10.8 16 M16.2 16.2 L13.8 18.8" fill="none" stroke="#00ED64" stroke-width="3.6" stroke-linecap="butt"/></svg>
<span class="t m" style="left:565.0px;top:1137.1px;font-size:24px;color:#E6EEF4;transform:scaleX(0.9649);transform-origin:0 0;-webkit-text-stroke:0.9px #E6EEF4;">_id</span>
<span class="t m" style="left:830.4px;top:1137.1px;font-size:24px;color:#C3CBCE;letter-spacing:-0.19px;-webkit-text-stroke:0.3px #C3CBCE;">object_id</span>
<span class="t m" style="left:565.0px;top:1173.1px;font-size:24px;color:#E6EEF4;letter-spacing:-0.17px;-webkit-text-stroke:0.9px #E6EEF4;">supplierId</span>
<span class="t m" style="left:859.2px;top:1173.1px;font-size:24px;color:#C3CBCE;letter-spacing:-0.25px;-webkit-text-stroke:0.3px #C3CBCE;">integer</span>
<span class="t m" style="left:565.0px;top:1209.1px;font-size:24px;color:#E6EEF4;letter-spacing:-0.15px;-webkit-text-stroke:0.9px #E6EEF4;">companyName</span>
<span class="t m" style="left:873.6px;top:1209.1px;font-size:24px;color:#C3CBCE;letter-spacing:-0.30px;-webkit-text-stroke:0.3px #C3CBCE;">string</span>
<span class="t m" style="left:565.0px;top:1245.1px;font-size:24px;color:#E6EEF4;letter-spacing:-0.15px;-webkit-text-stroke:0.9px #E6EEF4;">contactName</span>
<span class="t m" style="left:873.6px;top:1245.1px;font-size:24px;color:#C3CBCE;letter-spacing:-0.30px;-webkit-text-stroke:0.3px #C3CBCE;">string</span>
<span class="t m" style="left:565.0px;top:1281.1px;font-size:24px;color:#E6EEF4;letter-spacing:-0.14px;-webkit-text-stroke:0.9px #E6EEF4;">contactTitle</span>
<span class="t m" style="left:873.6px;top:1281.1px;font-size:24px;color:#C3CBCE;letter-spacing:-0.30px;-webkit-text-stroke:0.3px #C3CBCE;">string</span>
<span class="t m" style="left:565.0px;top:1317.1px;font-size:24px;color:#E6EEF4;letter-spacing:-0.25px;-webkit-text-stroke:0.9px #E6EEF4;">address</span>
<span class="t m" style="left:873.6px;top:1317.1px;font-size:24px;color:#C3CBCE;letter-spacing:-0.30px;-webkit-text-stroke:0.3px #C3CBCE;">string</span>
<span class="t m" style="left:565.0px;top:1353.1px;font-size:24px;color:#E6EEF4;transform:scaleX(0.9738);transform-origin:0 0;-webkit-text-stroke:0.9px #E6EEF4;">city</span>
<span class="t m" style="left:873.6px;top:1353.1px;font-size:24px;color:#C3CBCE;letter-spacing:-0.30px;-webkit-text-stroke:0.3px #C3CBCE;">string</span>
<span class="t m" style="left:565.0px;top:1389.1px;font-size:24px;color:#E6EEF4;letter-spacing:-0.30px;-webkit-text-stroke:0.9px #E6EEF4;">region</span>
<span class="t m" style="left:873.6px;top:1389.1px;font-size:24px;color:#C3CBCE;letter-spacing:-0.30px;-webkit-text-stroke:0.3px #C3CBCE;">string</span>
<span class="t m" style="left:565.0px;top:1425.1px;font-size:24px;color:#E6EEF4;letter-spacing:-0.17px;-webkit-text-stroke:0.9px #E6EEF4;">postalCode</span>
<span class="t m" style="left:873.6px;top:1425.1px;font-size:24px;color:#C3CBCE;letter-spacing:-0.30px;-webkit-text-stroke:0.3px #C3CBCE;">string</span>
<span class="t m" style="left:565.0px;top:1461.1px;font-size:24px;color:#E6EEF4;letter-spacing:-0.25px;-webkit-text-stroke:0.9px #E6EEF4;">country</span>
<span class="t m" style="left:873.6px;top:1461.1px;font-size:24px;color:#C3CBCE;letter-spacing:-0.30px;-webkit-text-stroke:0.3px #C3CBCE;">string</span>
<div class="a" style="left:1184px;top:1044px;width:508px;height:292px;border:4px solid #016BF8;border-radius:24px;"></div>
<div class="a" style="left:1195px;top:1054px;width:487px;height:272px;background:#001E2B;border:2px solid #5C6C75;border-radius:14px;overflow:hidden;"><div style="position:absolute;left:0;top:0;right:0;height:56px;background:#3D4F58;"></div><div style="position:absolute;left:0;top:0;bottom:0;width:4px;background:#00ED64;"></div></div>
<svg class="a" style="left:1229.5px;top:1073.2px;" width="13.0" height="21.799999999999955" viewBox="0 0 13 21.8"><circle cx="2.5" cy="2.5" r="2.3" fill="#D3DADE"/><circle cx="2.5" cy="10.9" r="2.3" fill="#D3DADE"/><circle cx="2.5" cy="19.2" r="2.3" fill="#D3DADE"/><circle cx="10.5" cy="2.5" r="2.3" fill="#D3DADE"/><circle cx="10.5" cy="10.9" r="2.3" fill="#D3DADE"/><circle cx="10.5" cy="19.2" r="2.3" fill="#D3DADE"/></svg>
<span class="t m" style="left:1253.0px;top:1073.1px;font-size:26px;color:#F9FBFA;font-weight:700;letter-spacing:-0.11px;">categories</span>
<svg class="a" style="left:1218px;top:1136px;" width="20" height="20" viewBox="0 0 20 20"><g fill="none" stroke="#00ED64" stroke-width="4.2"><circle cx="6.3" cy="6.3" r="4.1"/></g><path d="M8.6 8.6 L17.6 17.2 M13.2 13.4 L10.8 16 M16.2 16.2 L13.8 18.8" fill="none" stroke="#00ED64" stroke-width="3.6" stroke-linecap="butt"/></svg>
<span class="t m" style="left:1253.0px;top:1137.1px;font-size:24px;color:#E6EEF4;transform:scaleX(0.9649);transform-origin:0 0;-webkit-text-stroke:0.9px #E6EEF4;">_id</span>
<span class="t m" style="left:1518.9px;top:1137.1px;font-size:24px;color:#C3CBCE;letter-spacing:-0.19px;-webkit-text-stroke:0.3px #C3CBCE;">object_id</span>
<span class="t m" style="left:1253.0px;top:1173.1px;font-size:24px;color:#E6EEF4;letter-spacing:-0.17px;-webkit-text-stroke:0.9px #E6EEF4;">categoryId</span>
<span class="t m" style="left:1547.7px;top:1173.1px;font-size:24px;color:#C3CBCE;letter-spacing:-0.25px;-webkit-text-stroke:0.3px #C3CBCE;">integer</span>
<span class="t m" style="left:1253.0px;top:1209.1px;font-size:24px;color:#E6EEF4;letter-spacing:-0.14px;-webkit-text-stroke:0.9px #E6EEF4;">categoryName</span>
<span class="t m" style="left:1562.1px;top:1209.1px;font-size:24px;color:#C3CBCE;letter-spacing:-0.30px;-webkit-text-stroke:0.3px #C3CBCE;">string</span>
<span class="t m" style="left:1253.0px;top:1245.1px;font-size:24px;color:#E6EEF4;letter-spacing:-0.15px;-webkit-text-stroke:0.9px #E6EEF4;">description</span>
<span class="t m" style="left:1562.1px;top:1245.1px;font-size:24px;color:#C3CBCE;letter-spacing:-0.30px;-webkit-text-stroke:0.3px #C3CBCE;">string</span>
<span class="t m" style="left:1253.0px;top:1281.1px;font-size:24px;color:#E6EEF4;letter-spacing:-0.25px;-webkit-text-stroke:0.9px #E6EEF4;">picture</span>
<span class="t m" style="left:1533.3px;top:1281.1px;font-size:24px;color:#C3CBCE;letter-spacing:-0.22px;-webkit-text-stroke:0.3px #C3CBCE;">bin_data</span>
<div class="a" style="left:1930px;top:1273px;width:10px;height:15px;background:#34474F;"></div>
<div class="a" style="left:564px;top:1294px;width:56px;height:168px;background:#3D4F58;border:2px solid #7B8B93;border-radius:11px;"></div>
<div class="a" style="left:566px;top:1349px;width:53px;height:3px;background:#7B8B93;"></div>
<div class="a" style="left:566px;top:1405px;width:53px;height:3px;background:#7B8B93;"></div>
<svg class="a" style="left:582.5px;top:1312px;" width="20.0" height="20" viewBox="0 0 20.0 20"><path d="M10 2.6 V17.4 M2.6 10 H17.4" stroke="#EEF2F2" stroke-width="4" stroke-linecap="round"/></svg>
<svg class="a" style="left:582.5px;top:1368px;" width="20.0" height="20" viewBox="0 0 20.0 20"><path d="M3 10 H17" stroke="#EEF2F2" stroke-width="4" stroke-linecap="round"/></svg>
<svg class="a" style="left:581.5px;top:1423.3px;" width="22.0" height="19.0" viewBox="0 0 22 19"><path d="M2 7 V2 H8 M14 2 H20 V7 M20 12 V17 H14 M8 17 H2 V12" fill="none" stroke="#F9FBFA" stroke-width="3"/></svg>
<span class="t m" style="left:649.0px;top:1441.4px;font-size:22px;color:#7E8F98;letter-spacing:-0.10px;-webkit-text-stroke:0.3px #7E8F98;">100%</span>
<span class="t m" style="left:735.0px;top:1441.4px;font-size:22px;color:#7E8F98;letter-spacing:0.18px;-webkit-text-stroke:0.3px #7E8F98;">MongoDB</span>
<svg class="a" style="left:1997px;top:220px;" width="20" height="28" viewBox="0 0 20 28"><path d="M4 4 L15 14 L4 24" fill="none" stroke="#C3CBCE" stroke-width="5.5" stroke-linecap="round" stroke-linejoin="round"/></svg>
<span class="t s" style="left:2050.5px;top:218.6px;font-size:26.5px;color:#F9FBFA;font-weight:700;letter-spacing:-0.24px;-webkit-text-stroke:0.7px #F9FBFA;">Mappings</span>
<span class="t s" style="left:1978.5px;top:301.5px;font-size:26px;color:#F9FBFA;font-weight:700;letter-spacing:-0.17px;-webkit-text-stroke:0.7px #F9FBFA;">MongoDB collection</span>
<div class="a" style="left:2378px;top:278px;width:216px;height:72px;background:#3D4F58;border:2px solid #788B97;border-radius:11px;"></div>
<svg class="a" style="left:2401.2px;top:298.2px;" width="33.40000000000009" height="33.400000000000034" viewBox="0 0 16 16"><path d="M10.92 0.68a0.96 0.96 0 0 1 1.36 0l1.36 1.36a0.96 0.96 0 0 1 0 1.36L12.28 4.77 9.56 2.04Z M8.88 2.73L1.46 10.15 0.78 13.55 4.18 12.87 11.6 5.45Z" fill="#E3ECF3"/></svg>
<span class="t s" style="left:2446.5px;top:301.6px;font-size:26.5px;color:#F9FBFA;font-weight:700;letter-spacing:-0.27px;-webkit-text-stroke:0.7px #F9FBFA;">Configure</span>
<span class="t s" style="left:1978.5px;top:390.6px;font-size:26.5px;color:#F9FBFA;font-weight:700;transform:scaleX(0.9604);transform-origin:0 0;-webkit-text-stroke:0.7px #F9FBFA;">Type:</span>
<svg class="a" style="left:2207.6px;top:390.6px;" width="26.800000000000182" height="23.19999999999999" viewBox="0.5 1.5 15 13"><path d="M2 2a1 1 0 0 0-1 1v10a1 1 0 0 0 1 1h12a1 1 0 0 0 1-1V5a1 1 0 0 0-1-1H8.2a1 1 0 0 1-.7-.3L6.4 2.3A1 1 0 0 0 5.7 2H2z" fill="#8A979D"/></svg>
<span class="t s" style="left:2245.5px;top:389.6px;font-size:26.5px;color:#E3ECF3;letter-spacing:0.64px;-webkit-text-stroke:0.55px #E3ECF3;">Regular collection</span>
<span class="t s" style="left:1978.5px;top:502.1px;font-size:26.5px;color:#F9FBFA;font-weight:700;letter-spacing:0.60px;-webkit-text-stroke:0.7px #F9FBFA;">Name</span>
<div class="a" style="left:1978px;top:542px;width:616px;height:72px;border:2px solid #7B8B93;border-radius:13px;"></div>
<span class="t s" style="left:2004.0px;top:566.6px;font-size:26.5px;color:#E3ECF3;letter-spacing:1.03px;-webkit-text-stroke:0.55px #E3ECF3;">categories</span>
<div class="a" style="left:1978px;top:662px;width:616px;height:2px;background:#3D4F58;"></div>
<span class="t s" style="left:1978.5px;top:721.0px;font-size:26px;color:#F9FBFA;font-weight:700;letter-spacing:0.20px;-webkit-text-stroke:0.7px #F9FBFA;">Mappings from relational tables</span>
<div class="a" style="left:2451px;top:697px;width:143px;height:71px;background:#3D4F58;border:2px solid #788B97;border-radius:13px;"></div>
<svg class="a" style="left:2479px;top:721px;" width="24" height="24" viewBox="0 0 24 24"><path d="M12 1.5 V22.5 M1.5 12 H22.5" stroke="#F9FBFA" stroke-width="5" stroke-linecap="round"/></svg>
<span class="t s" style="left:2519.0px;top:720.6px;font-size:26.5px;color:#F9FBFA;font-weight:700;transform:scaleX(0.9706);transform-origin:0 0;-webkit-text-stroke:0.7px #F9FBFA;">Add</span>
<div class="a" style="left:1978px;top:801px;width:616px;height:147px;border:2px solid #2C3F4A;border-radius:26px;box-shadow:0 6px 14px rgba(0,0,0,0.3);"></div>
<svg class="a" style="left:2015.5px;top:843.8px;" width="25.0" height="21.0" viewBox="0 0 25.0 21.0"><rect x="1.65" y="1.65" width="21.7" height="17.7" rx="1.5" fill="none" stroke="#889397" stroke-width="3.3"/><path d="M1 9.2 H24 M12.5 1 V20" stroke="#889397" stroke-width="2.9" fill="none"/></svg>
<span class="t s" style="left:2052.5px;top:842.0px;font-size:26px;color:#F9FBFA;font-weight:700;letter-spacing:0.46px;-webkit-text-stroke:0.7px #F9FBFA;">Categories</span>
<span class="t s" style="left:2013.0px;top:882.6px;font-size:26.5px;color:#C3CBCE;letter-spacing:0.62px;-webkit-text-stroke:0.55px #C3CBCE;">New documents</span>
<svg class="a" style="left:2442.6px;top:860.1px;" width="34.70000000000027" height="34.69999999999993" viewBox="0 0 16 16"><path d="M10.92 0.68a0.96 0.96 0 0 1 1.36 0l1.36 1.36a0.96 0.96 0 0 1 0 1.36L12.28 4.77 9.56 2.04Z M8.88 2.73L1.46 10.15 0.78 13.55 4.18 12.87 11.6 5.45Z" fill="#C3CBCE"/></svg>
<svg class="a" style="left:2519px;top:862.5px;" width="26.5" height="28.5" viewBox="0 0 28 30"><g fill="#C3CBCE"><path d="M9.5 1 H18.5 Q20 1 20.3 2.4 L20.6 3.6 H26 Q27 3.6 27 4.8 V6.2 Q27 7 26 7 H2 Q1 7 1 6.2 V4.8 Q1 3.6 2 3.6 H7.4 L7.7 2.4 Q8 1 9.5 1 Z"/><path d="M2.8 9.2 H25.2 L22.9 26.6 Q22.6 29 20.2 29 H7.8 Q5.4 29 5.1 26.6 Z"/></g></svg>
<div class="a" style="left:1978px;top:981px;width:616px;height:56px;background:#3D4F58;border:2px solid #788B97;border-radius:13px;"></div>
<span class="t s" style="left:2127.0px;top:997.0px;font-size:26px;color:#F9FBFA;font-weight:700;letter-spacing:-0.20px;-webkit-text-stroke:0.7px #F9FBFA;">Suggested mappings</span>
<div class="a" style="left:2403px;top:992px;width:41px;height:36px;background:#0B419A;border:2px solid #1656BE;border-radius:18px;"></div>
<span class="t s" style="left:2416.5px;top:998.7px;font-size:24px;color:#C3E7FE;font-weight:700;-webkit-text-stroke:0.7px #C3E7FE;">2</span>
<svg class="a" style="left:0;top:0" width="2620" height="1494" viewBox="0 0 2620 1494"><path d="M0 1470 V1494 H2626 V1472 A20 20 0 0 1 2606 1492 H22.5 A20 20 0 0 1 2.5 1472 V1470 Z" fill="#A9B0B4"/></svg>
</body></html>
